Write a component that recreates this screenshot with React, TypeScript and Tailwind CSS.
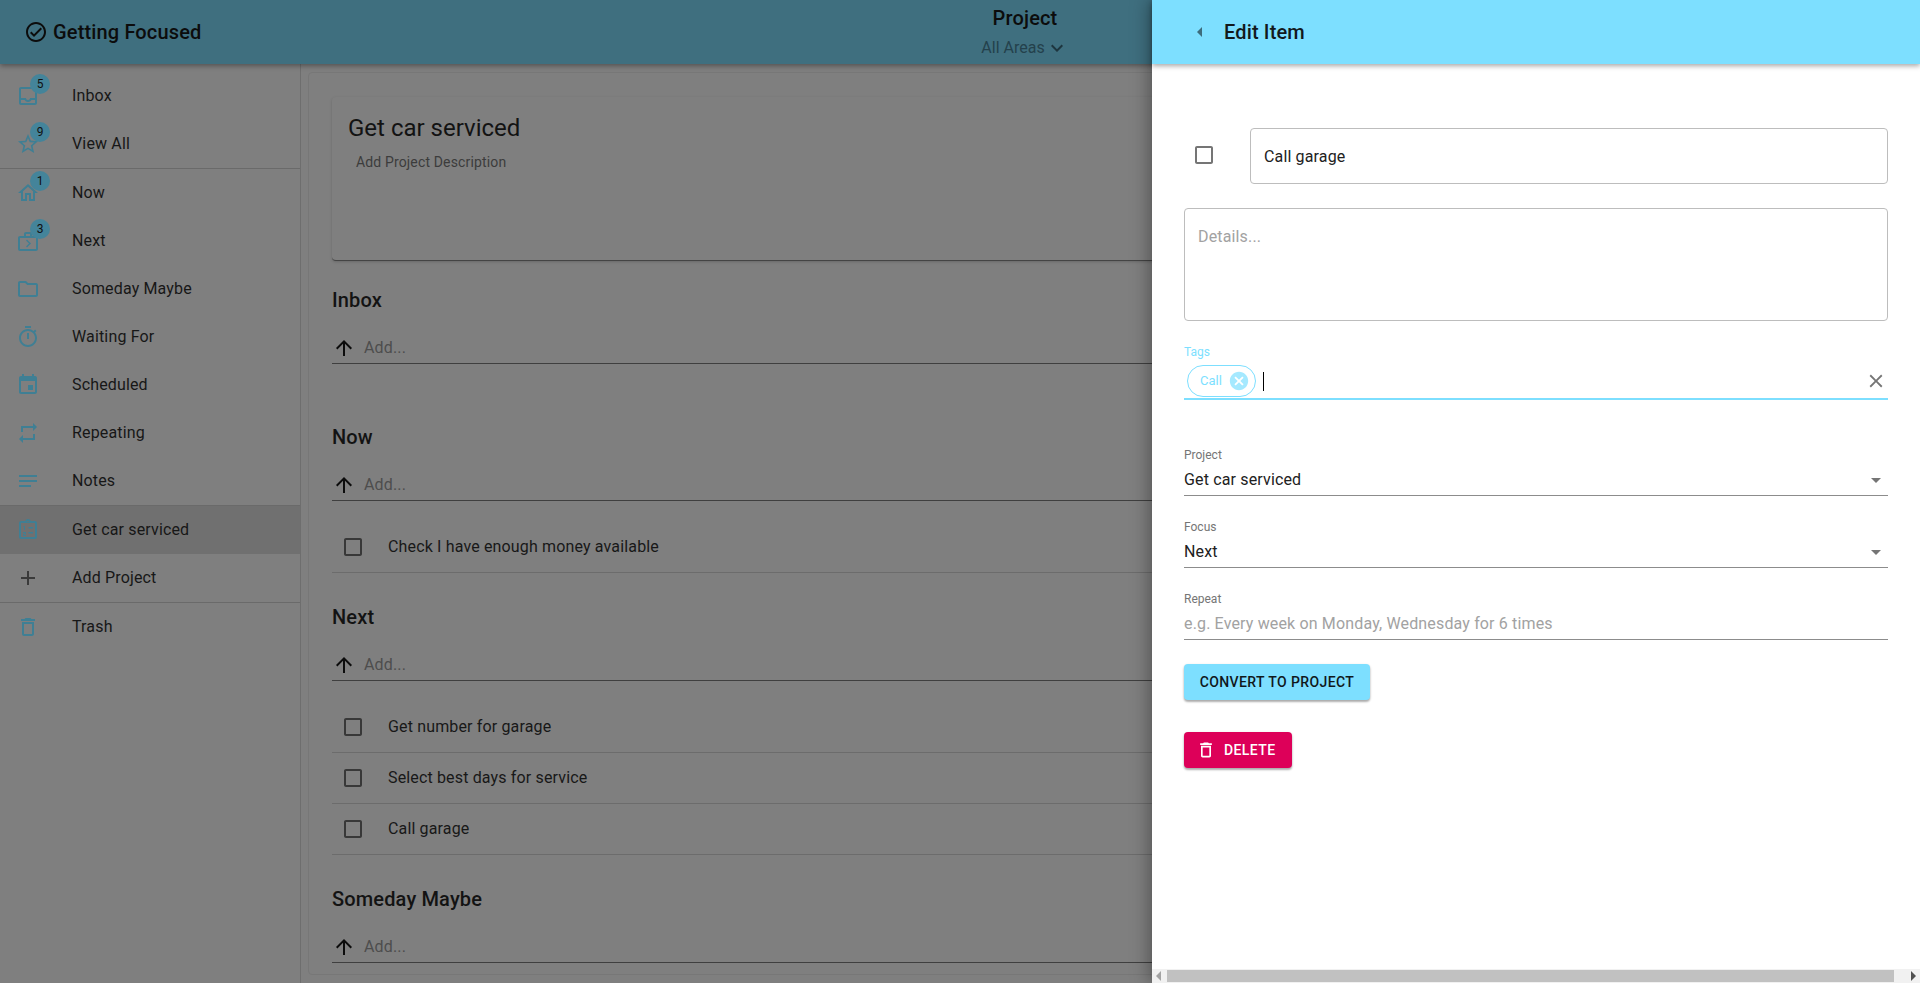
const font = { fontFamily: "Roboto, sans-serif" };

const paths = {
  inbox:
    "M19 3H5c-1.1 0-2 .9-2 2v14c0 1.1.9 2 2 2h14c1.1 0 2-.9 2-2V5c0-1.1-.9-2-2-2zm0 16H5v-3h3.56c.69 1.19 1.97 2 3.45 2s2.75-.81 3.45-2H19v3zm0-5h-4.99c0 1.1-.9 2-2 2s-2-.9-2-2H5V5h14v9z",
  star: "M22 9.24l-7.19-.62L12 2 9.19 8.63 2 9.24l5.46 4.73L5.82 21 12 17.27 18.18 21l-1.63-7.03L22 9.24zM12 15.4l-3.76 2.27 1-4.28-3.32-2.88 4.38-.38L12 6.1l1.71 4.04 4.38.38-3.32 2.88 1 4.28L12 15.4z",
  home: "M12 5.69l5 4.5V18h-2v-6H9v6H7v-7.81l5-4.5M12 3L2 12h3v8h6v-6h2v6h6v-8h3L12 3z",
  next: "M20 7h-4V5c0-.55-.22-1.05-.59-1.41C15.05 3.22 14.55 3 14 3h-4c-1.1 0-2 .9-2 2v2H4c-1.1 0-2 .9-2 2v11c0 1.1.9 2 2 2h16c1.1 0 2-.9 2-2V9c0-1.1-.9-2-2-2zM10 5h4v2h-4V5zm10 15H4V9h16v11zM11 18.5l4-4-4-4-1 1 3 3-3 3z",
  folder:
    "M9.17 6l2 2H20v10H4V6h5.17M10 4H4c-1.1 0-1.99.9-1.99 2L2 18c0 1.1.9 2 2 2h16c1.1 0 2-.9 2-2V8c0-1.1-.9-2-2-2h-8l-2-2z",
  timer:
    "M15 1H9v2h6V1zm-4 13h2V8h-2v6zm8.03-6.61l1.42-1.42c-.43-.51-.9-.99-1.41-1.41l-1.42 1.42C16.07 4.74 14.12 4 12 4c-4.97 0-9 4.03-9 9s4.02 9 9 9 9-4.03 9-9c0-2.12-.74-4.07-1.97-5.61zM12 20c-3.87 0-7-3.13-7-7s3.13-7 7-7 7 3.13 7 7-3.13 7-7 7z",
  event:
    "M17 12h-5v5h5v-5zM16 1v2H8V1H6v2H5c-1.11 0-1.99.9-1.99 2L3 19c0 1.1.89 2 2 2h14c1.1 0 2-.9 2-2V5c0-1.1-.9-2-2-2h-1V1h-2zm3 18H5V8h14v11z",
  repeat: "M7 7h10v3l4-4-4-4v3H5v6h2V7zm10 10H7v-3l-4 4 4 4v-3h12v-6h-2v4z",
  notes: "M3 18h12v-2H3v2zM3 6v2h18V6H3zm0 7h18v-2H3v2z",
  clipboard:
    "M19 3h-4.18C14.4 1.84 13.3 1 12 1c-1.3 0-2.4.84-2.82 2H5c-1.1 0-2 .9-2 2v14c0 1.1.9 2 2 2h14c1.1 0 2-.9 2-2V5c0-1.1-.9-2-2-2zm-7-.25c.41 0 .75.34.75.75s-.34.75-.75.75-.75-.34-.75-.75.34-.75.75-.75zM19 19H5V5h14v14zM12.5 9H17v1.6h-4.5zM12.5 14H17v1.6h-4.5zM7.5 8H9v4H8V9H7.5zM7 14h3v2.2H8v.8h2v1H7v-2.2h2V15H7z",
  plus: "M19 13h-6v6h-2v-6H5v-2h6V5h2v6h6v2z",
  trash:
    "M6 19c0 1.1.9 2 2 2h8c1.1 0 2-.9 2-2V7H6v12zM8 9h8v10H8V9zm7.5-5l-1-1h-5l-1 1H5v2h14V4z",
  checkCircle:
    "M16.59 7.58L10 14.17l-2.59-2.58L6 13l4 4 8-8zM12 2C6.48 2 2 6.48 2 12s4.48 10 10 10 10-4.48 10-10S17.52 2 12 2zm0 18c-4.42 0-8-3.58-8-8s3.58-8 8-8 8 3.58 8 8-3.58 8-8 8z",
  checkbox:
    "M19 5v14H5V5h14m0-2H5c-1.1 0-2 .9-2 2v14c0 1.1.9 2 2 2h14c1.1 0 2-.9 2-2V5c0-1.1-.9-2-2-2z",
  arrowUp: "M4 12l1.41 1.41L11 7.83V20h2V7.83l5.58 5.59L20 12l-8-8-8 8z",
  expand: "M16.59 8.59L12 13.17 7.41 8.59 6 10l6 6 6-6z",
  caretLeft: "M14 7l-5 5 5 5V7z",
  dropDown: "M7 10l5 5 5-5z",
  close:
    "M19 6.41L17.59 5 12 10.59 6.41 5 5 6.41 10.59 12 5 17.59 6.41 19 12 13.41 17.59 19 19 17.59 13.41 12z",
  cancel:
    "M12 2C6.47 2 2 6.47 2 12s4.47 10 10 10 10-4.47 10-10S17.53 2 12 2zm5 13.59L15.59 17 12 13.41 8.41 17 7 15.59 10.59 12 7 8.41 8.41 7 12 10.59 15.59 7 17 8.41 13.41 12 17 15.59z",
};

type IconName = keyof typeof paths;

function Icon({ name, className }: { name: IconName; className: string }) {
  return (
    <svg viewBox="0 0 24 24" fill="currentColor" className={className}>
      <path d={paths[name]} />
    </svg>
  );
}

interface NavItem {
  label: string;
  icon: IconName;
  badge?: number;
  active?: boolean;
  plain?: boolean;
}

const navGroups: NavItem[][] = [
  [
    { label: "Inbox", icon: "inbox", badge: 5 },
    { label: "View All", icon: "star", badge: 9 },
  ],
  [
    { label: "Now", icon: "home", badge: 1 },
    { label: "Next", icon: "next", badge: 3 },
    { label: "Someday Maybe", icon: "folder" },
    { label: "Waiting For", icon: "timer" },
    { label: "Scheduled", icon: "event" },
    { label: "Repeating", icon: "repeat" },
    { label: "Notes", icon: "notes" },
  ],
  [
    { label: "Get car serviced", icon: "clipboard", active: true },
    { label: "Add Project", icon: "plus", plain: true },
  ],
  [{ label: "Trash", icon: "trash" }],
];

const sections = [
  { title: "Inbox", items: [] as string[] },
  { title: "Now", items: ["Check I have enough money available"] },
  { title: "Next", items: ["Get number for garage", "Select best days for service", "Call garage"] },
  { title: "Someday Maybe", items: [] as string[] },
];

function NavRow({ item }: { item: NavItem }) {
  return (
    <div className={`flex h-12 items-center pl-4 ${item.active ? "bg-[#707070]" : ""}`}>
      <div className="relative h-6 w-6">
        <Icon
          name={item.icon}
          className={`h-6 w-6 ${item.plain ? "text-[#3a3a3a]" : "text-[#3f7f94]"}`}
        />
        {item.badge !== undefined && (
          <span className="absolute left-[14px] top-[-10px] flex h-5 w-5 items-center justify-center rounded-full bg-[#44849a] text-xs tracking-normal text-[#101010]">
            {item.badge}
          </span>
        )}
      </div>
      <span className="ml-8 text-base text-[#171717]">{item.label}</span>
    </div>
  );
}

function Sidebar() {
  return (
    <aside className="w-[301px] shrink-0 border-r border-[#6e6e6e] pt-2">
      {navGroups.map((group, i) => (
        <div key={i} className={i > 0 ? "border-t border-[#6a6a6a]" : ""}>
          {group.map((item) => (
            <NavRow key={item.label} item={item} />
          ))}
        </div>
      ))}
    </aside>
  );
}

function AddRow() {
  return (
    <div className="flex h-8 items-center border-b border-[#3f3f3f]">
      <Icon name="arrowUp" className="h-6 w-6 text-[#0c0c0c]" />
      <span className="ml-2 text-base text-[#4d4d4d]">Add...</span>
    </div>
  );
}

function Section({ title, items }: { title: string; items: string[] }) {
  return (
    <section>
      <h2 className="h-8 text-xl font-medium leading-8 text-[#131313]">{title}</h2>
      <div className="mt-4">
        <AddRow />
      </div>
      <div className="mb-[28px] mt-[21px] min-h-2">
        {items.map((item) => (
          <div key={item} className="flex h-[51px] items-center border-b border-[#6c6c6c] pl-[9px]">
            <Icon name="checkbox" className="h-6 w-6 text-[#383838]" />
            <span className="ml-[23px] text-base text-[#181818]">{item}</span>
          </div>
        ))}
      </div>
    </section>
  );
}

function Main() {
  return (
    <main className="min-w-0 flex-1 pl-[7px] pt-2">
      <div className="h-[903px] overflow-hidden rounded border border-[#777777] py-6 pl-[23px] pr-6">
        <div className="mb-[23px] h-[164px] rounded border-b border-[#444444] bg-[#7f7f7f] pl-4 pt-[16px] shadow-[0_1px_3px_rgba(0,0,0,0.18)]">
          <h1 className="text-2xl leading-[30px] tracking-normal text-[#131313]">Get car serviced</h1>
          <p className="ml-2 mt-[9px] text-sm leading-5 text-[#3c3c3c]">Add Project Description</p>
        </div>
        {sections.map((s) => (
          <Section key={s.title} title={s.title} items={s.items} />
        ))}
      </div>
    </main>
  );
}

function Header() {
  return (
    <header className="relative z-10 flex h-16 bg-[#3f6f7f] shadow-[0_2px_5px_rgba(0,0,0,0.35)]">
      <div className="flex w-[980px] items-center pl-6">
        <Icon name="checkCircle" className="h-6 w-6 text-[#0c0c0c]" />
        <span className="ml-[5px] text-xl font-medium text-[#0c0c0c]">Getting Focused</span>
      </div>
      <div className="flex w-[90px] flex-col items-center">
        <span className="mt-[6px] text-xl font-medium leading-6 text-[#0c0c0c]">Project</span>
        <div className="mt-[6px] flex h-6 items-center whitespace-nowrap text-base tracking-normal text-[#24414c]">
          All Areas
          <Icon name="expand" className="h-6 w-6 text-[#1e363f]" />
        </div>
      </div>
    </header>
  );
}

function LineField({
  label,
  value,
  placeholder,
  select,
}: {
  label: string;
  value?: string;
  placeholder?: string;
  select?: boolean;
}) {
  return (
    <div className="h-[72px] pt-[17px]">
      <div className="text-xs leading-[14px] tracking-normal text-[#757575]">{label}</div>
      <div className="mt-[2px] flex h-[32px] items-center border-b border-[#8c8c8c]">
        <span className={`flex-1 text-base ${value ? "text-[#212121]" : "text-[#a2a2a2]"}`}>
          {value ?? placeholder}
        </span>
        {select && <Icon name="dropDown" className="h-6 w-6 text-[#757575]" />}
      </div>
    </div>
  );
}

function Scrollbar() {
  return (
    <div className="mt-auto flex h-[14px] items-center bg-[#f1f1f1]">
      <div className="ml-[4px] h-0 w-0 border-y-[5px] border-r-[5px] border-y-transparent border-r-[#a3a3a3]" />
      <div className="ml-[6px] h-[12px] w-[727px] bg-[#c1c1c1]" />
      <div className="ml-[17px] h-0 w-0 border-y-[5px] border-l-[5px] border-y-transparent border-l-[#505050]" />
    </div>
  );
}

function EditDrawer() {
  return (
    <div className="absolute inset-y-0 right-0 z-30 flex w-[768px] flex-col bg-white shadow-[-2px_0_18px_rgba(0,0,0,0.38)]">
      <div className="flex h-16 shrink-0 items-center bg-[#7ddfff] pl-[36px] shadow-[0_2px_5px_rgba(0,0,0,0.35)]">
        <Icon name="caretLeft" className="h-6 w-6 text-[#3d6c7c]" />
        <span className="ml-3 text-xl font-medium text-[#12191c]">Edit Item</span>
      </div>
      <div className="px-8 pt-16">
        <div className="flex items-center">
          <div className="flex w-[66px] justify-start pb-[2px] pl-2">
            <Icon name="checkbox" className="h-6 w-6 text-[#757575]" />
          </div>
          <div className="flex h-[56px] flex-1 items-center rounded border border-[#bdbdbd] px-[13px] pt-[2px] text-base text-[#212121]">
            Call garage
          </div>
        </div>
        <div className="mt-[24px] h-[113px] rounded border border-[#bdbdbd] px-[13px] pt-[18px] text-base leading-5 text-[#a2a2a2]">
          Details...
        </div>
        <div className="mt-[24px]">
          <div className="text-xs leading-[14px] tracking-normal text-[#7ddfff]">Tags</div>
          <div className="mt-[1px] h-[40px] border-b-2 border-[#7ddfff] pt-[5px]">
            <div className="flex h-8 items-center">
              <div className="ml-[3px] flex h-8 w-[69px] items-center rounded-full border border-[#7ddfff] pl-3 text-[13px] tracking-normal text-[#7ddfff]">
                Call
                <Icon name="cancel" className="ml-[6px] h-[22px] w-[22px] text-[#a5e9ff]" />
              </div>
              <div className="ml-[7px] h-[19px] w-px bg-black" />
              <Icon name="close" className="ml-auto mr-px h-[22px] w-[22px] text-[#757575]" />
            </div>
          </div>
        </div>
        <div className="mt-[31px]">
          <LineField label="Project" value="Get car serviced" select />
          <LineField label="Focus" value="Next" select />
          <LineField label="Repeat" placeholder="e.g. Every week on Monday, Wednesday for 6 times" />
        </div>
        <button className="mt-[17px] block h-9 w-[186px] rounded bg-[#7ddfff] text-sm font-medium tracking-[0.4px] text-[#10181b] shadow-[0_2px_2px_rgba(0,0,0,0.25),0_1px_3px_rgba(0,0,0,0.15)]">
          CONVERT TO PROJECT
        </button>
        <button className="mt-8 flex h-9 w-[108px] items-center rounded bg-[#dd0059] pl-3 text-sm font-medium tracking-[0.4px] text-white shadow-[0_2px_2px_rgba(0,0,0,0.25),0_1px_3px_rgba(0,0,0,0.15)]">
          <Icon name="trash" className="h-[20px] w-[20px]" />
          <span className="ml-2">DELETE</span>
        </button>
      </div>
      <Scrollbar />
    </div>
  );
}

export default function App() {
  return (
    <div className="relative h-[983px] w-[1920px] overflow-hidden bg-[#7f7f7f] tracking-[0.15px]" style={font}>
      <Header />
      <div className="flex h-[919px]">
        <Sidebar />
        <Main />
      </div>
      <EditDrawer />
    </div>
  );
}
